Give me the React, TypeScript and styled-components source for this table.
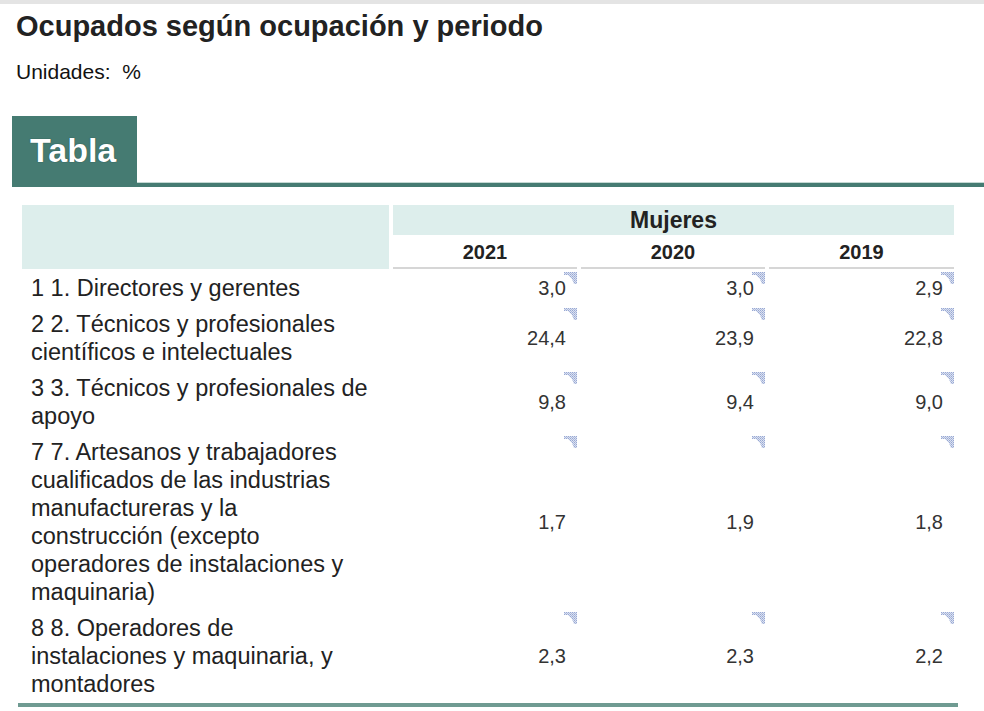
import { createGlobalStyle } from 'styled-components';
import styled from 'styled-components';

type TRow = {
  label: string[];
  values: string[];
};

const years = ['2021', '2020', '2019'];

const rows: TRow[] = [
  { label: ['1 1. Directores y gerentes'], values: ['3,0', '3,0', '2,9'] },
  {
    label: ['2 2. Técnicos y profesionales', 'científicos e intelectuales'],
    values: ['24,4', '23,9', '22,8']
  },
  {
    label: ['3 3. Técnicos y profesionales de', 'apoyo'],
    values: ['9,8', '9,4', '9,0']
  },
  {
    label: [
      '7 7. Artesanos y trabajadores',
      'cualificados de las industrias',
      'manufactureras y la',
      'construcción (excepto',
      'operadores de instalaciones y',
      'maquinaria)'
    ],
    values: ['1,7', '1,9', '1,8']
  },
  {
    label: ['8 8. Operadores de', 'instalaciones y maquinaria, y', 'montadores'],
    values: ['2,3', '2,3', '2,2']
  }
];

const NoteMark = () => (
  <MarkSvg width="15" height="12" viewBox="0 0 15 12">
    <defs>
      <pattern id="dots" width="2" height="2" patternUnits="userSpaceOnUse">
        <rect width="2" height="2" fill="#dbe1f0" />
        <rect width="1" height="1" fill="#97a8d4" />
        <rect x="1" y="1" width="1" height="1" fill="#adbadd" />
      </pattern>
    </defs>
    <polygon points="2,0 15,0 15,12 12,12 10,7 6,3 2,3" fill="url(#dots)" />
  </MarkSvg>
);

export default function App() {
  return (
    <>
      <GlobalStyle />
      <TopBar />
      <Page>
        <Title>Ocupados según ocupación y periodo</Title>
        <Units>Unidades:&nbsp; %</Units>
        <TabBar>
          <Tab>Tabla</Tab>
        </TabBar>
        <DataTable>
          <colgroup>
            <col style={{ width: 367 }} />
            <col style={{ width: 184 }} />
            <col style={{ width: 184 }} />
            <col style={{ width: 185 }} />
          </colgroup>
          <thead>
            <tr>
              <CornerCell rowSpan={2} />
              <GroupCell colSpan={3}>Mujeres</GroupCell>
            </tr>
            <tr>
              {years.map((y) => (
                <YearCell key={y}>{y}</YearCell>
              ))}
            </tr>
          </thead>
          <tbody>
            {rows.map((row) => (
              <tr key={row.label[0]}>
                <LabelCell>
                  {row.label.map((line, i) => (
                    <span key={line}>
                      {i > 0 && <br />}
                      {line}
                    </span>
                  ))}
                </LabelCell>
                {row.values.map((v, i) => (
                  <ValueCell key={i}>
                    <NoteMark />
                    {v}
                  </ValueCell>
                ))}
              </tr>
            ))}
          </tbody>
        </DataTable>
      </Page>
    </>
  );
}

const GlobalStyle = createGlobalStyle`
  html, body {
    margin: 0;
    padding: 0;
    background: #ffffff;
  }

  body {
    font-family: "Liberation Sans", Arial, sans-serif;
    color: #222222;
  }
`;

const TopBar = styled.div`
  height: 4px;
  background-color: #e4e4e4;
`;

const Page = styled.div`
  padding-left: 12px;
`;

const Title = styled.h1`
  margin: 4px 0 0 4px;
  font-size: 29px;
  line-height: 36px;
  font-weight: 700;
  color: #222222;
`;

const Units = styled.p`
  margin: 15px 0 0 4px;
  font-size: 21px;
  line-height: 26px;
  color: #111111;
`;

const TabBar = styled.div`
  margin-top: 31px;
  display: flex;
  border-bottom: 4px solid #457b72;
  box-shadow: 0 -1px 0 #c4d8d3 inset;
`;

const Tab = styled.div`
  width: 125px;
  height: 67px;
  box-sizing: border-box;
  padding: 14px 0 0 18px;
  background-color: #457b72;
  color: #ffffff;
  font-size: 34px;
  line-height: 40px;
  font-weight: 700;
  text-shadow: 0 0 1px rgba(10, 40, 35, 0.8);
`;

const DataTable = styled.table`
  margin: 16px 0 0 6px;
  width: 940px;
  table-layout: fixed;
  border-collapse: separate;
  border-spacing: 4px 2px;
  border-bottom: 4px solid #6f9b92;
`;

const CornerCell = styled.th`
  background-color: #ddeeec;
  padding: 0;
`;

const GroupCell = styled.th`
  height: 30px;
  padding: 0;
  background-color: #ddeeec;
  font-size: 23px;
  font-weight: 700;
  text-align: center;
  color: #222222;
`;

const YearCell = styled.th`
  height: 30px;
  padding: 0;
  border-bottom: 2px solid #d6d6d6;
  font-size: 20px;
  font-weight: 700;
  text-align: center;
  color: #222222;
`;

const LabelCell = styled.td`
  padding: 3px 4px 3px 9px;
  font-size: 23.5px;
  line-height: 28px;
  color: #222222;
  white-space: nowrap;
  vertical-align: top;
`;

const ValueCell = styled.td`
  position: relative;
  padding: 3px 11px 3px 0;
  font-size: 20px;
  line-height: 28px;
  text-align: right;
  vertical-align: middle;
  color: #333333;
`;

const MarkSvg = styled.svg`
  position: absolute;
  top: 1px;
  right: 0;
`;
